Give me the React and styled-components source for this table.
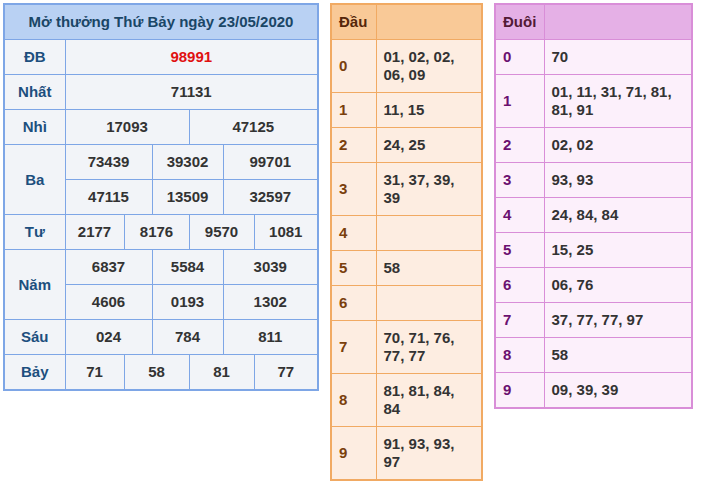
import React from "react";
import styled, { createGlobalStyle } from "styled-components";

const GlobalStyle = createGlobalStyle`
  body {
    margin: 0;
    background: #ffffff;
    font-family: "Liberation Sans", Arial, sans-serif;
  }
`;

const Page = styled.div`
  display: flex;
  align-items: flex-start;
  gap: 11px;
  padding: 3px 0 0 3px;
`;

const palettes = {
  blue: { border: "#7ea6e6", head: "#b9d1f3", body: "#f2f4f8", label: "#1d4f7e", title: "#1a4666" },
  orange: { border: "#f1aa63", head: "#f9c997", body: "#fdede1", label: "#7a3f0c", title: "#55260a" },
  purple: { border: "#d98ed8", head: "#e5b0e6", body: "#fcf0fb", label: "#6b1070", title: "#521a36" },
};

const Table = styled.table`
  border-collapse: collapse;
  table-layout: fixed;
  width: ${(p) => p.$width}px;
  border: 2px solid ${(p) => palettes[p.$tone].border};
  background: ${(p) => palettes[p.$tone].body};
  font-size: 15px;
  font-weight: bold;
  line-height: 18px;
  color: #333;

  td,
  th {
    border: 1px solid ${(p) => palettes[p.$tone].border};
    padding: 8px 0;
    height: 18px;
  }
`;

const TitleCell = styled.th`
  background: ${(p) => palettes[p.$tone].head};
  color: ${(p) => palettes[p.$tone].title};
  text-align: ${(p) => (p.$left ? "left" : "center")};
  th& {
    padding-left: ${(p) => (p.$left ? "7px" : "0")};
  }
`;

const Label = styled.td`
  color: ${(p) => palettes[p.$tone].label};
  text-align: ${(p) => (p.$left ? "left" : "center")};
  vertical-align: middle;
  td& {
    padding-left: ${(p) => (p.$left ? "7px" : "0")};
  }
`;

const Num = styled.td`
  text-align: center;
  color: ${(p) => (p.$special ? "#e01010" : "#333")};
`;

const List = styled.td`
  text-align: left;
  td& {
    padding: 8px 8px 8px 7px;
  }
`;

const prizes = [
  { label: "ĐB", groups: [["98991"]], special: true },
  { label: "Nhất", groups: [["71131"]] },
  { label: "Nhì", groups: [["17093", "47125"]] },
  { label: "Ba", groups: [["73439", "39302", "99701"], ["47115", "13509", "32597"]] },
  { label: "Tư", groups: [["2177", "8176", "9570", "1081"]] },
  { label: "Năm", groups: [["6837", "5584", "3039"], ["4606", "0193", "1302"]] },
  { label: "Sáu", groups: [["024", "784", "811"]] },
  { label: "Bảy", groups: [["71", "58", "81", "77"]] },
];

// column boundaries picked so 1, 2, 3 and 4 numbers per row land where they do
const spans = {
  1: [6],
  2: [3, 3],
  3: [2, 2, 2],
  4: [1, 2, 2, 1],
};
const colWidths = [61, 59, 28, 37, 34, 31, 64];

const heads = [
  "01, 02, 02, 06, 09",
  "11, 15",
  "24, 25",
  "31, 37, 39, 39",
  "",
  "58",
  "",
  "70, 71, 76, 77, 77",
  "81, 81, 84, 84",
  "91, 93, 93, 97",
];

const tails = [
  "70",
  "01, 11, 31, 71, 81, 81, 91",
  "02, 02",
  "93, 93",
  "24, 84, 84",
  "15, 25",
  "06, 76",
  "37, 77, 77, 97",
  "58",
  "09, 39, 39",
];

function ResultTable() {
  return (
    <Table $tone="blue" $width={316}>
      <colgroup>
        {colWidths.map((w, i) => (
          <col key={i} style={{ width: w }} />
        ))}
      </colgroup>
      <thead>
        <tr>
          <TitleCell $tone="blue" colSpan={7}>
            Mở thưởng Thứ Bảy ngày 23/05/2020
          </TitleCell>
        </tr>
      </thead>
      <tbody>
        {prizes.map((prize) =>
          prize.groups.map((nums, gi) => (
            <tr key={prize.label + gi}>
              {gi === 0 && (
                <Label $tone="blue" rowSpan={prize.groups.length}>
                  {prize.label}
                </Label>
              )}
              {nums.map((n, ni) => (
                <Num key={ni} colSpan={spans[nums.length][ni]} $special={prize.special}>
                  {n}
                </Num>
              ))}
            </tr>
          ))
        )}
      </tbody>
    </Table>
  );
}

function LotoTable({ tone, title, rows, width, labelWidth }) {
  return (
    <Table $tone={tone} $width={width}>
      <colgroup>
        <col style={{ width: labelWidth }} />
        <col />
      </colgroup>
      <thead>
        <tr>
          <TitleCell $tone={tone} $left>
            {title}
          </TitleCell>
          <TitleCell $tone={tone} />
        </tr>
      </thead>
      <tbody>
        {rows.map((r, i) => (
          <tr key={i}>
            <Label $tone={tone} $left>
              {i}
            </Label>
            <List>{r}</List>
          </tr>
        ))}
      </tbody>
    </Table>
  );
}

export default function App() {
  return (
    <>
      <GlobalStyle />
      <Page>
        <ResultTable />
        <LotoTable tone="orange" title="Đầu" rows={heads} width={153} labelWidth={45} />
        <LotoTable tone="purple" title="Đuôi" rows={tails} width={199} labelWidth={49} />
      </Page>
    </>
  );
}
